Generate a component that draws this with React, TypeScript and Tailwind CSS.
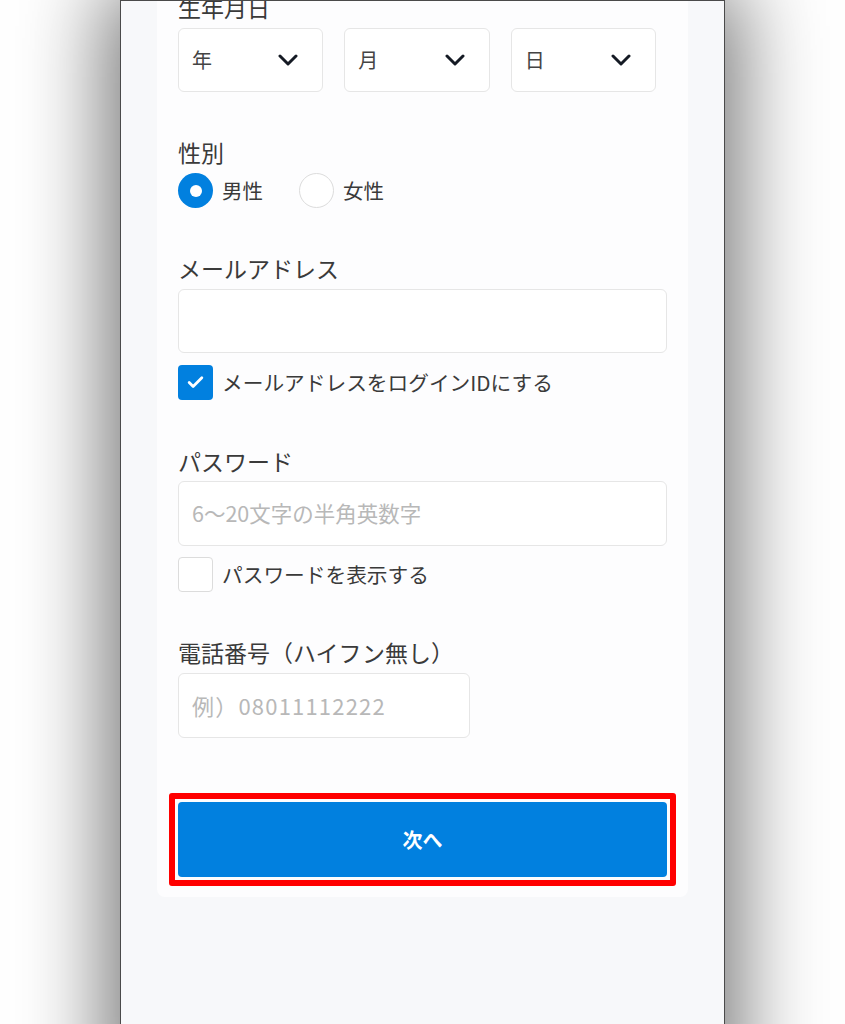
import { Check } from "lucide-react";

const font = { fontFamily: '"Noto Sans CJK JP", "Noto Sans", sans-serif' };

function Chevron() {
  return (
    <svg width="20" height="12" viewBox="0 0 20 12" fill="none">
      <polyline points="2,2 10,10 18,2" stroke="#151a24" strokeWidth="3" strokeLinecap="round" strokeLinejoin="round" />
    </svg>
  );
}

function SelectBox({ label }: { label: string }) {
  return (
    <div className="h-[64px] flex items-center justify-between pl-[13px] pr-[24px] bg-white border border-[#e6e6e6] rounded-md">
      <span className="text-[20px] text-[#444]">{label}</span>
      <Chevron />
    </div>
  );
}

function Label({ text, className = "" }: { text: string; className?: string }) {
  return <div className={`h-8 leading-8 text-[23px] text-[#3a3a3a] ${className}`}>{text}</div>;
}

export default function App() {
  return (
    <div style={font} className="w-[845px] h-[1024px] bg-white overflow-hidden flex justify-center">
      <div className="w-[605px] h-[1100px] shrink-0 bg-[#f7f8fa] border border-[#4a4a4a] px-9 shadow-[0_0_80px_14px_rgba(0,0,0,0.55)] overflow-hidden">
        <div className="-mt-[10px] bg-[#fdfdfe] rounded-b-lg px-[21px] pb-[20px]">
          <Label text="生年月日" />
          <div className="mt-[5px] grid grid-cols-3 gap-[21px] w-[478px]">
            <SelectBox label="年" />
            <SelectBox label="月" />
            <SelectBox label="日" />
          </div>

          <Label text="性別" className="mt-[44px]" />
          <div className="mt-[5px] h-[35px] flex items-center">
            <div className="w-[35px] h-[35px] rounded-full bg-[#0180df] flex items-center justify-center">
              <div className="w-[12px] h-[12px] rounded-full bg-white" />
            </div>
            <span className="ml-[9px] text-[20.5px] text-[#3a3a3a]">男性</span>
            <div className="ml-[36px] w-[35px] h-[35px] rounded-full bg-white border-[1.5px] border-[#dcdcdc]" />
            <span className="ml-[9px] text-[20.5px] text-[#3a3a3a]">女性</span>
          </div>

          <Label text="メールアドレス" className="mt-[44px]" />
          <div className="mt-[5px] h-[64px] bg-white border border-[#e6e6e6] rounded-md" />
          <div className="mt-3 h-[35px] flex items-center">
            <div className="w-[35px] h-[35px] rounded bg-[#0180df] flex items-center justify-center">
              <Check className="w-[19px] h-[19px] text-white" strokeWidth={3.5} />
            </div>
            <span className="ml-[9px] text-[20.7px] text-[#3a3a3a]">メールアドレスをログインIDにする</span>
          </div>

          <Label text="パスワード" className="mt-[45px]" />
          <div className="mt-[4px] h-[65px] bg-white border border-[#e6e6e6] rounded-md flex items-center pl-[13px]">
            <span className="text-[21.5px] text-[#b8b8b8]">6〜20文字の半角英数字</span>
          </div>
          <div className="mt-[11px] h-[35px] flex items-center">
            <div className="w-[35px] h-[35px] rounded bg-white border-[1.5px] border-[#dcdcdc]" />
            <span className="ml-[9px] text-[20.7px] text-[#3a3a3a]">パスワードを表示する</span>
          </div>

          <Label text="電話番号（ハイフン無し）" className="mt-[44px]" />
          <div className="mt-[5px] w-[292px] h-[65px] bg-white border border-[#e6e6e6] rounded-md flex items-center pl-[13px]">
            <span className="text-[22px] tracking-[1.2px] text-[#b8b8b8]">例）08011112222</span>
          </div>

          <div className="relative mt-[64px]">
            <button className="w-full h-[75px] rounded bg-[#0180df] text-white text-[20px] font-bold">
              次へ
            </button>
            <div className="absolute -inset-[9px] border-[6px] border-[#ff0000] rounded-[3px] pointer-events-none" />
          </div>
        </div>
      </div>
    </div>
  );
}
